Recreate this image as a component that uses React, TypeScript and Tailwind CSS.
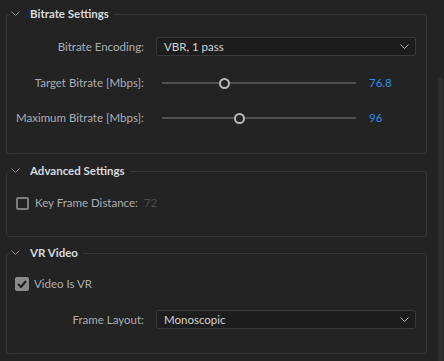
import React from 'react';

const font = { fontFamily: 'Lato, "Liberation Sans", sans-serif' };

function Chevron({ className = '' }: { className?: string }) {
  return (
    <svg width="9" height="5" viewBox="0 0 9 5" className={className}>
      <path d="M0.5 0.5 L4.5 4.5 L8.5 0.5" fill="none" stroke="currentColor" strokeWidth="1" />
    </svg>
  );
}

function Section({
  title,
  className = '',
  children,
}: {
  title: string;
  className?: string;
  children: React.ReactNode;
}) {
  return (
    <fieldset className={`w-[421px] border border-[#363636] rounded-[3px] ${className}`}>
      <legend className="ml-[3px] pr-[5px] flex items-center h-[16px]">
        <Chevron className="text-[#8c8c8c] ml-[1px] mr-[10px] -mt-[2px]" />
        <span className="text-[11.5px] font-bold text-[#d6d9de]">{title}</span>
      </legend>
      {children}
    </fieldset>
  );
}

function Select({ value }: { value: string }) {
  return (
    <div className="w-[260px] h-[19px] bg-[#1d1d1d] border border-[#383838] rounded-[2px] flex items-center justify-between pl-[7px] pr-[6px]">
      <span className="text-[11.5px] text-[#d2d2d2]">{value}</span>
      <Chevron className="text-[#b0b0b0]" />
    </div>
  );
}

function SliderRow({ label, value, pct }: { label: string; value: string; pct: number }) {
  return (
    <div className="flex items-center h-[20px]">
      <span className="w-[137px] text-right text-[11.5px] text-[#a9adb3]">{label}</span>
      <div className="relative ml-[18px] w-[194px] h-[2px] bg-[#505050]">
        <div
          className="absolute top-1/2 w-[11px] h-[11px] -mt-[5.5px] -ml-[5.5px] rounded-full border-2 border-[#b9b9b9] bg-[#232323]"
          style={{ left: `${pct}%` }}
        />
      </div>
      <span className="ml-[13px] text-[11.5px] text-[#2d8ceb]">{value}</span>
    </div>
  );
}

export default function App() {
  return (
    <div className="w-[444px] h-[361px] bg-[#232323] flex overflow-hidden" style={font}>
      <div className="pl-[6px] pt-[6px] w-[433px] flex flex-col">
        {/* Bitrate */}
        <Section title="Bitrate Settings" className="pb-[25px]">
          <div className="flex items-center mt-[15px]">
            <span className="w-[137px] text-right text-[11.5px] text-[#a9adb3]">Bitrate Encoding:</span>
            <div className="ml-[12px]">
              <Select value="VBR, 1 pass" />
            </div>
          </div>
          <div className="mt-[17px]">
            <SliderRow label="Target Bitrate [Mbps]:" value="76.8" pct={32} />
          </div>
          <div className="mt-[15px]">
            <SliderRow label="Maximum Bitrate [Mbps]:" value="96" pct={40} />
          </div>
        </Section>

        {/* Advanced */}
        <Section title="Advanced Settings" className="mt-[9px] pb-[23px]">
          <div className="flex items-center h-[20px] mt-[14px] pl-[9px]">
            <div className="w-[13px] h-[13px] border-2 border-[#7c7c7c] rounded-[2px]" />
            <span className="ml-[6px] text-[11.5px] text-[#a9adb3]">Key Frame Distance:</span>
            <span className="ml-[6px] text-[11.5px] text-[#4a4a4a]">72</span>
          </div>
        </Section>

        {/* VR */}
        <Section title="VR Video" className="mt-[8px] pb-[24px]">
          <div className="flex items-center h-[20px] mt-[13px] pl-[8px]">
            <div className="w-[14px] h-[14px] bg-[#8a8a8a] rounded-[2px] flex items-center justify-center">
              <svg width="10" height="8" viewBox="0 0 10 8">
                <path d="M1 4 L4 7 L9 1" fill="none" stroke="#1f1f1f" strokeWidth="2" />
              </svg>
            </div>
            <span className="ml-[5px] text-[11.5px] text-[#a9adb3]">Video Is VR</span>
          </div>
          <div className="flex items-center mt-[16px]">
            <span className="w-[137px] text-right text-[11.5px] text-[#a9adb3]">Frame Layout:</span>
            <div className="ml-[12px]">
              <Select value="Monoscopic" />
            </div>
          </div>
        </Section>
      </div>
      <div className="flex-1 flex justify-end pr-[1px]">
        <div className="w-[5px] mt-[78px] h-[290px] bg-[#2e2e2e] rounded-l-[2px]" />
      </div>
    </div>
  );
}
